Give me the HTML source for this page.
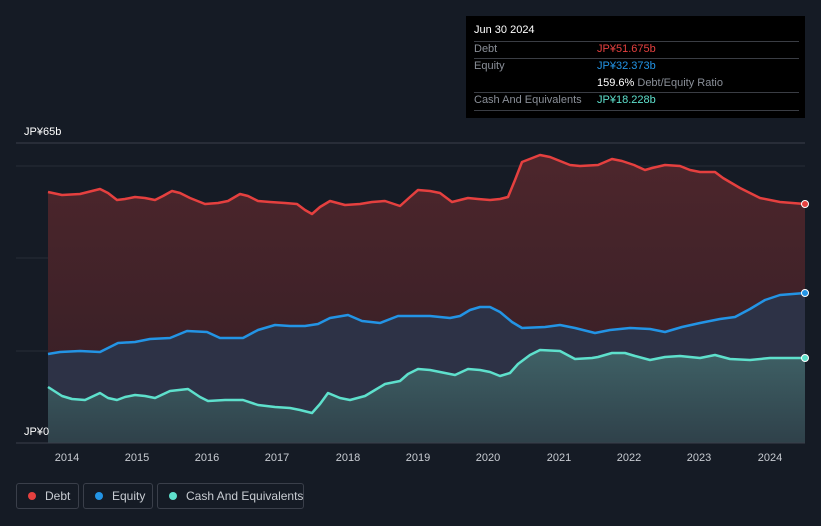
<!DOCTYPE html>
<html><head><meta charset="utf-8"><style>
body{margin:0;width:821px;height:526px;background:#151b25;font-family:"Liberation Sans",sans-serif;overflow:hidden;position:relative}
.tt{position:absolute;left:466px;top:16px;width:339px;height:102px;background:#000;color:#fff;font-size:11px}
.tt .r{position:absolute;left:8px;right:6px;border-top:1px solid #3a3d44}
.lab{position:absolute;color:#8a8f98}
.leg{position:absolute;top:483px;height:26px;border:1px solid #3a3f4a;border-radius:3px;color:#c8ccd2;font-size:12px;line-height:24px;box-sizing:border-box;white-space:nowrap}
.leg i{position:absolute;left:11px;top:8px;width:8px;height:8px;border-radius:50%}
.leg span{white-space:nowrap}
</style></head><body>
<svg width="821" height="526" style="position:absolute;left:0;top:0">
<defs>
<linearGradient id="gd" x1="0" y1="0" x2="0" y2="1"><stop offset="0" stop-color="#4d262c"/><stop offset="1" stop-color="#331e25"/></linearGradient>
<linearGradient id="gc" x1="0" y1="0" x2="0" y2="1"><stop offset="0" stop-color="#3f6166"/><stop offset="1" stop-color="#2f414a"/></linearGradient>
</defs>
<line x1="16" y1="143" x2="805" y2="143" stroke="#3a3f4a"/>
<line x1="16" y1="166" x2="805" y2="166" stroke="#272c36"/>
<line x1="16" y1="258" x2="805" y2="258" stroke="#272c36"/>
<line x1="16" y1="351" x2="805" y2="351" stroke="#272c36"/>
<polygon fill="url(#gd)" points="48,443 48,192 62,195 80,194 92,191 100,189 108,193 117,200 125,199 135,197 145,198 155,200 163,196 172,191 180,193 190,198 205,204 218,203 228,201 240,194 248,196 258,201 270,202 285,203 297,204 305,210 312,214 320,207 330,201 345,205 360,204 372,202 385,201 400,206 410,197 418,190 430,191 440,193 452,202 468,198 478,199 490,200 500,199 508,197 515,180 522,162 540,155 550,157 570,165 580,166 598,165 612,159 622,161 634,165 645,170 652,168 665,165 680,166 690,170 700,172 715,172 723,178 740,188 760,198 780,202 805,204 805,443"/>
<polygon fill="#2d3246" points="48,443 48,354 60,352 80,351 100,352 108,348 118,343 135,342 150,339 170,338 187,331 207,332 220,338 243,338 258,330 275,325 290,326 305,326 318,324 330,318 348,315 362,321 380,323 398,316 430,316 450,318 460,316 470,310 480,307 490,307 500,312 512,322 522,328 545,327 560,325 575,328 595,333 610,330 630,328 650,329 665,332 682,327 700,323 720,319 735,317 750,309 765,300 780,295 805,293 805,443"/>
<polygon fill="url(#gc)" points="48,443 48,387 62,396 72,399 85,400 100,393 108,398 117,400 125,397 135,395 145,396 155,398 170,391 188,389 200,397 208,401 225,400 243,400 258,405 275,407 290,408 300,410 312,413 320,404 328,393 340,398 350,400 365,396 375,390 385,384 400,381 408,374 418,369 430,370 440,372 455,375 468,369 480,370 490,372 500,376 510,373 518,364 530,355 540,350 560,351 575,359 592,358 598,357 612,353 625,353 635,356 650,360 665,357 680,356 700,358 715,355 730,359 750,360 770,358 805,358 805,443"/>
<polyline fill="none" stroke="#e5403f" stroke-width="2.5" stroke-linejoin="round" points="48,192 62,195 80,194 92,191 100,189 108,193 117,200 125,199 135,197 145,198 155,200 163,196 172,191 180,193 190,198 205,204 218,203 228,201 240,194 248,196 258,201 270,202 285,203 297,204 305,210 312,214 320,207 330,201 345,205 360,204 372,202 385,201 400,206 410,197 418,190 430,191 440,193 452,202 468,198 478,199 490,200 500,199 508,197 515,180 522,162 540,155 550,157 570,165 580,166 598,165 612,159 622,161 634,165 645,170 652,168 665,165 680,166 690,170 700,172 715,172 723,178 740,188 760,198 780,202 805,204"/>
<polyline fill="none" stroke="#2394e5" stroke-width="2.5" stroke-linejoin="round" points="48,354 60,352 80,351 100,352 108,348 118,343 135,342 150,339 170,338 187,331 207,332 220,338 243,338 258,330 275,325 290,326 305,326 318,324 330,318 348,315 362,321 380,323 398,316 430,316 450,318 460,316 470,310 480,307 490,307 500,312 512,322 522,328 545,327 560,325 575,328 595,333 610,330 630,328 650,329 665,332 682,327 700,323 720,319 735,317 750,309 765,300 780,295 805,293"/>
<polyline fill="none" stroke="#5ee0cc" stroke-width="2.5" stroke-linejoin="round" points="48,387 62,396 72,399 85,400 100,393 108,398 117,400 125,397 135,395 145,396 155,398 170,391 188,389 200,397 208,401 225,400 243,400 258,405 275,407 290,408 300,410 312,413 320,404 328,393 340,398 350,400 365,396 375,390 385,384 400,381 408,374 418,369 430,370 440,372 455,375 468,369 480,370 490,372 500,376 510,373 518,364 530,355 540,350 560,351 575,359 592,358 598,357 612,353 625,353 635,356 650,360 665,357 680,356 700,358 715,355 730,359 750,360 770,358 805,358"/>
<line x1="16" y1="443" x2="805" y2="443" stroke="#3a3f4a"/>
<circle cx="805" cy="204" r="3.5" fill="#e5403f" stroke="#fff" stroke-width="1"/>
<circle cx="805" cy="293" r="3.5" fill="#2394e5" stroke="#fff" stroke-width="1"/>
<circle cx="805" cy="358" r="3.5" fill="#5ee0cc" stroke="#fff" stroke-width="1"/>
<g fill="#fff" font-size="11" font-family="Liberation Sans,sans-serif">
<text x="24" y="135">JP¥65b</text><text x="24" y="435">JP¥0</text>
<g fill="#c8ccd2" text-anchor="middle"><text x="67" y="461">2014</text><text x="137" y="461">2015</text><text x="207" y="461">2016</text><text x="277" y="461">2017</text><text x="348" y="461">2018</text><text x="418" y="461">2019</text><text x="488" y="461">2020</text><text x="559" y="461">2021</text><text x="629" y="461">2022</text><text x="699" y="461">2023</text><text x="770" y="461">2024</text></g>
</g>
</svg>
<div class="tt">
<div style="position:absolute;left:8px;top:8px;font-size:11px">Jun 30 2024</div>
<div class="r" style="top:25px"></div>
<div class="lab" style="left:8px;top:27px">Debt</div><div style="position:absolute;left:131px;top:27px;color:#e5403f">JP¥51.675b</div>
<div class="r" style="top:42px"></div>
<div class="lab" style="left:8px;top:44px">Equity</div><div style="position:absolute;left:131px;top:44px;color:#2394e5">JP¥32.373b</div>
<div style="position:absolute;left:131px;top:61px">159.6% <span style="color:#8a8f98">Debt/Equity Ratio</span></div>
<div class="r" style="top:76px"></div>
<div class="lab" style="left:8px;top:78px">Cash And Equivalents</div><div style="position:absolute;left:131px;top:78px;color:#5ee0cc">JP¥18.228b</div>
<div class="r" style="top:94px"></div>
</div>
<div class="leg" style="left:16px;width:63px"><i style="background:#e5403f"></i><span style="position:absolute;left:28px">Debt</span></div>
<div class="leg" style="left:83px;width:70px"><i style="background:#2394e5"></i><span style="position:absolute;left:28px">Equity</span></div>
<div class="leg" style="left:157px;width:147px"><i style="background:#5ee0cc"></i><span style="position:absolute;left:28px">Cash And Equivalents</span></div>
</body></html>
